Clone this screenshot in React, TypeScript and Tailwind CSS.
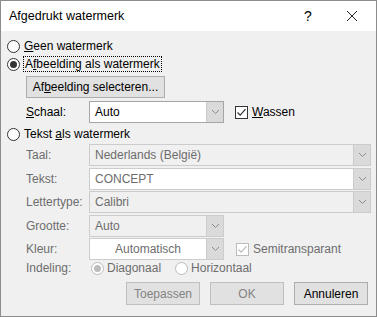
import React from "react";

function Radio({ checked, disabled }: { checked?: boolean; disabled?: boolean }) {
  const ring = disabled ? "border-[#bcbcbc]" : "border-[#333333]";
  const dot = disabled ? "bg-[#bcbcbc]" : "bg-[#333333]";
  return (
    <span className={`flex items-center justify-center w-[13px] h-[13px] rounded-full border bg-white shrink-0 ${ring}`}>
      {checked && <span className={`w-[7px] h-[7px] rounded-full ${dot}`} />}
    </span>
  );
}

function Check({ disabled }: { disabled?: boolean }) {
  const c = disabled ? "#bcbcbc" : "#333333";
  return (
    <span className={`flex items-center justify-center w-[13px] h-[13px] border bg-white shrink-0 ${disabled ? "border-[#bcbcbc]" : "border-[#333333]"}`}>
      <svg width="11" height="11" viewBox="0 0 11 11">
        <path d="M1.5 5.5 L4.2 8.2 L9.5 2.2" fill="none" stroke={c} strokeWidth="1.2" />
      </svg>
    </span>
  );
}

function Chevron() {
  return (
    <svg width="9" height="6" viewBox="0 0 9 6">
      <path d="M1 1 L4.5 4.5 L8 1" fill="none" stroke="#8a8a8a" strokeWidth="1" />
    </svg>
  );
}

function Combo({
  value,
  width,
  disabled,
  white,
  center,
}: {
  value: string;
  width: string;
  disabled?: boolean;
  white?: boolean;
  center?: boolean;
}) {
  return (
    <div
      className={`flex h-[22px] border ${width} ${
        white ? "bg-white" : "bg-[#f0f0f0]"
      } ${disabled ? "border-[#cccccc]" : "border-[#a5a5a5]"}`}
    >
      <span
        className={`flex-1 flex items-center px-[5px] ${center ? "justify-center" : ""} ${
          disabled ? "text-[#6d6d6d]" : "text-black"
        }`}
      >
        {value}
      </span>
      <span className="flex items-center justify-center w-[17px] bg-[#dadada] border-l border-[#cccccc]">
        <Chevron />
      </span>
    </div>
  );
}

function Row({ label, children, disabled }: { label: React.ReactNode; children: React.ReactNode; disabled?: boolean }) {
  return (
    <div className="flex items-center pl-[25px] mb-[1.5px]">
      <span className={`w-[63px] ${disabled ? "text-[#6d6d6d]" : "text-black"}`}>{label}</span>
      {children}
    </div>
  );
}

export default function App() {
  return (
    <div
      className="w-[377px] h-[317px] border border-[#8c8c8c] bg-[#f0f0f0] flex flex-col text-[12px] leading-none text-black overflow-hidden"
      style={{ fontFamily: '"Segoe UI", "Liberation Sans", Arial, sans-serif' }}
    >
      <div className="h-[30px] bg-white flex items-center shrink-0">
        <span className="pl-[8px] flex-1 text-[12.5px]">Afgedrukt watermerk</span>
        <span className="w-[40px] text-center text-[14px]">?</span>
        <span className="w-[48px] flex justify-center">
          <svg width="12" height="12" viewBox="0 0 12 12">
            <path d="M1 1 L11 11 M11 1 L1 11" stroke="#222" strokeWidth="1" />
          </svg>
        </span>
      </div>

      <div className="flex flex-col pt-[6px]">
        <div className="flex items-center h-[18px] pl-[6px] gap-[4px]">
          <Radio />
          <span>
            <span className="underline">G</span>een watermerk
          </span>
        </div>
        <div className="flex items-center h-[18px] pl-[6px] gap-[3px]">
          <Radio checked />
          <span className="border border-dotted border-black px-[1px] py-[1px]">
            A<span className="underline">f</span>beelding als watermerk
          </span>
        </div>
        <div className="pl-[25px] mt-[3px]">
          <div className="w-[139px] h-[22px] bg-[#e1e1e1] border border-[#adadad] flex items-center justify-center">
            Af<span className="underline">b</span>eelding selecteren...
          </div>
        </div>
        <div className="flex items-center pl-[25px] mt-[3px]">
          <span className="w-[63px]">
            <span className="underline">S</span>chaal:
          </span>
          <Combo value="Auto" width="w-[135px]" white />
          <span className="ml-[11px] flex items-center gap-[4px]">
            <Check />
            <span>
              <span className="underline">W</span>assen
            </span>
          </span>
        </div>
        <div className="flex items-center h-[18px] pl-[6px] gap-[4px] mt-[2px]">
          <Radio />
          <span>
            Tekst <span className="underline">a</span>ls watermerk
          </span>
        </div>
        <div className="mt-[1px]">
          <Row label="Taal:" disabled>
            <Combo value="Nederlands (België)" width="w-[282px]" disabled />
          </Row>
          <Row label="Tekst:" disabled>
            <Combo value="CONCEPT" width="w-[282px]" disabled white />
          </Row>
          <Row label="Lettertype:" disabled>
            <Combo value="Calibri" width="w-[282px]" disabled />
          </Row>
          <Row label="Grootte:" disabled>
            <Combo value="Auto" width="w-[135px]" disabled />
          </Row>
          <Row label="Kleur:" disabled>
            <Combo value="Automatisch" width="w-[135px]" disabled white center />
            <span className="ml-[12px] flex items-center gap-[4px] text-[#6d6d6d]">
              <Check disabled />
              <span>Semitransparant</span>
            </span>
          </Row>
          <Row label="Indeling:" disabled>
            <span className="flex items-center gap-[3px] ml-[2px] text-[#6d6d6d]">
              <Radio checked disabled />
              <span>Diagonaal</span>
            </span>
            <span className="flex items-center gap-[3px] ml-[14px] text-[#6d6d6d]">
              <Radio disabled />
              <span>Horizontaal</span>
            </span>
          </Row>
        </div>
        <div className="flex justify-end gap-[10px] pr-[8px] mt-[6px]">
          <div className="w-[74px] h-[23px] bg-[#e1e1e1] border border-[#bfbfbf] text-[#838383] flex items-center justify-center">
            Toepassen
          </div>
          <div className="w-[74px] h-[23px] bg-[#e1e1e1] border border-[#bfbfbf] text-[#838383] flex items-center justify-center">
            OK
          </div>
          <div className="w-[74px] h-[23px] bg-[#e1e1e1] border border-[#adadad] flex items-center justify-center">
            Annuleren
          </div>
        </div>
      </div>
    </div>
  );
}
